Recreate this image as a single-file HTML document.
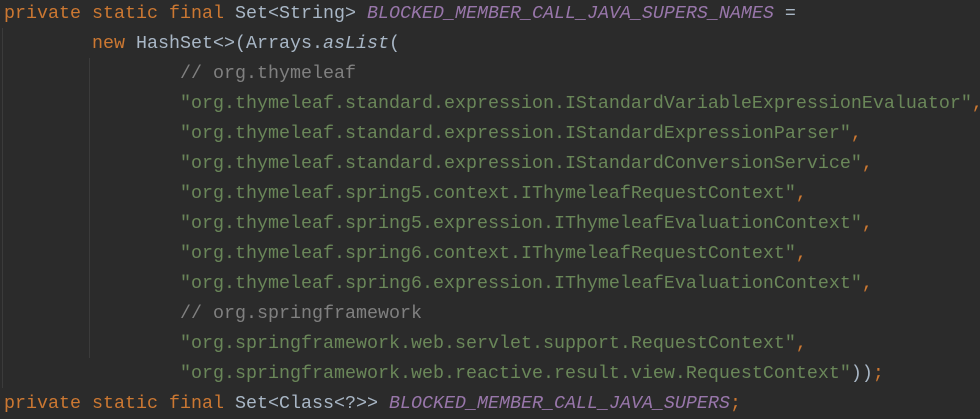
<html><head><style>
body{margin:0;background:#2b2b2b;width:980px;height:416px;overflow:hidden;position:relative}
pre{margin:0;position:absolute;left:4px;top:-1px;font-family:"Liberation Mono",monospace;font-size:18.33px;line-height:30px;color:#a9b7c6}
.k{color:#cc7832}.c{color:#9876aa;font-style:italic}.s{color:#6a8759}.m{color:#808080}.i{font-style:italic}
.g{position:absolute;width:1px;background:#3b3b3b}
</style></head><body>
<div class="g" style="left:2px;top:28px;height:360px"></div>
<div class="g" style="left:89px;top:58px;height:300px"></div>
<pre><span class="k">private static final</span> Set&lt;String&gt; <span class="c">BLOCKED_MEMBER_CALL_JAVA_SUPERS_NAMES</span> =
        <span class="k">new</span> HashSet&lt;&gt;(Arrays.<span class="i">asList</span>(
                <span class="m">// org.thymeleaf</span>
                <span class="s">"org.thymeleaf.standard.expression.IStandardVariableExpressionEvaluator"</span><span class="k">,</span>
                <span class="s">"org.thymeleaf.standard.expression.IStandardExpressionParser"</span><span class="k">,</span>
                <span class="s">"org.thymeleaf.standard.expression.IStandardConversionService"</span><span class="k">,</span>
                <span class="s">"org.thymeleaf.spring5.context.IThymeleafRequestContext"</span><span class="k">,</span>
                <span class="s">"org.thymeleaf.spring5.expression.IThymeleafEvaluationContext"</span><span class="k">,</span>
                <span class="s">"org.thymeleaf.spring6.context.IThymeleafRequestContext"</span><span class="k">,</span>
                <span class="s">"org.thymeleaf.spring6.expression.IThymeleafEvaluationContext"</span><span class="k">,</span>
                <span class="m">// org.springframework</span>
                <span class="s">"org.springframework.web.servlet.support.RequestContext"</span><span class="k">,</span>
                <span class="s">"org.springframework.web.reactive.result.view.RequestContext"</span>))<span class="k">;</span>
<span class="k">private static final</span> Set&lt;Class&lt;?&gt;&gt; <span class="c">BLOCKED_MEMBER_CALL_JAVA_SUPERS</span><span class="k">;</span>
</pre>
</body></html>
